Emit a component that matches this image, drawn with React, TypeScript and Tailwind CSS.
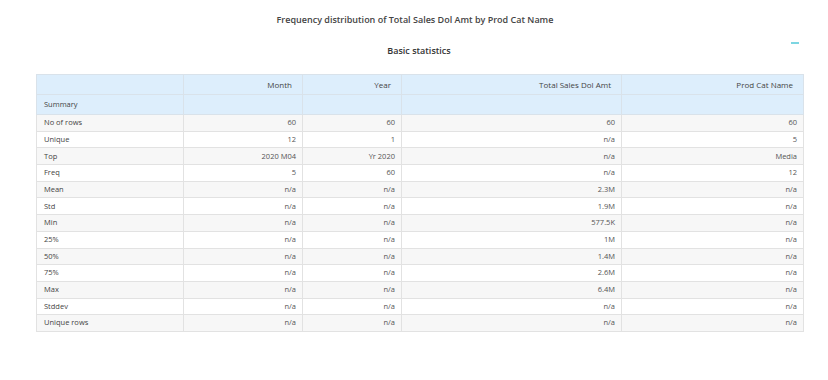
import React from "react";

const cols = ["Month", "Year", "Total Sales Dol Amt", "Prod Cat Name"];
const widths = [147, 119, 99, 220, 182];

const rows: [string, string, string, string, string][] = [
  ["No of rows", "60", "60", "60", "60"],
  ["Unique", "12", "1", "n/a", "5"],
  ["Top", "2020 M04", "Yr 2020", "n/a", "Media"],
  ["Freq", "5", "60", "n/a", "12"],
  ["Mean", "n/a", "n/a", "2.3M", "n/a"],
  ["Std", "n/a", "n/a", "1.9M", "n/a"],
  ["Min", "n/a", "n/a", "577.5K", "n/a"],
  ["25%", "n/a", "n/a", "1M", "n/a"],
  ["50%", "n/a", "n/a", "1.4M", "n/a"],
  ["75%", "n/a", "n/a", "2.6M", "n/a"],
  ["Max", "n/a", "n/a", "6.4M", "n/a"],
  ["Stddev", "n/a", "n/a", "n/a", "n/a"],
  ["Unique rows", "n/a", "n/a", "n/a", "n/a"],
];

export default function App() {
  return (
    <div
      className="w-[828px] h-[380px] bg-white relative text-[#555]"
      style={{ fontFamily: '"Open Sans", "Liberation Sans", sans-serif' }}
    >
      <div className="pt-[13px] text-center text-[9px] font-semibold text-[#444] leading-[14px] pl-[2px]">
        Frequency distribution of Total Sales Dol Amt by Prod Cat Name
      </div>
      <div className="absolute left-[791px] top-[42px] w-[8px] h-[2px] bg-[#7dd6e2]" />
      <div className="mt-[17px] text-center text-[9px] font-semibold text-[#333] leading-[14px] pl-[10px]">
        Basic statistics
      </div>
      <div className="mt-[16px] ml-[36px]">
        <table className="border-collapse table-fixed w-[768px] text-[7.5px]">
          <colgroup>
            {widths.map((w, i) => (
              <col key={i} style={{ width: w }} />
            ))}
          </colgroup>
          <thead>
            <tr className="h-[20px] bg-[#ddeefc]">
              <th className="border border-[#d9e2ea] font-normal" />
              {cols.map((c) => (
                <th
                  key={c}
                  className="border border-[#d9e2ea] font-normal text-right pr-[10px] text-[8px] text-[#444]"
                >
                  {c}
                </th>
              ))}
            </tr>
          </thead>
          <tbody>
            <tr className="h-[20px] bg-[#ddeefc]">
              <td className="border border-[#d9e2ea] text-left pl-[7px] text-[#444]">Summary</td>
              {cols.map((c) => (
                <td key={c} className="border border-[#d9e2ea]" />
              ))}
            </tr>
            {rows.map((r, i) => (
              <tr
                key={r[0]}
                className={`h-[16.7px] ${i % 2 === 0 ? "bg-[#f7f7f7]" : "bg-white"}`}
              >
                <td className="border border-[#e2e2e2] text-left pl-[7px] text-[#444]">
                  {r[0]}
                </td>
                {r.slice(1).map((v, j) => (
                  <td
                    key={j}
                    className="border border-[#e2e2e2] text-right pr-[6px] text-[#555]"
                  >
                    {v}
                  </td>
                ))}
              </tr>
            ))}
          </tbody>
        </table>
      </div>
    </div>
  );
}
